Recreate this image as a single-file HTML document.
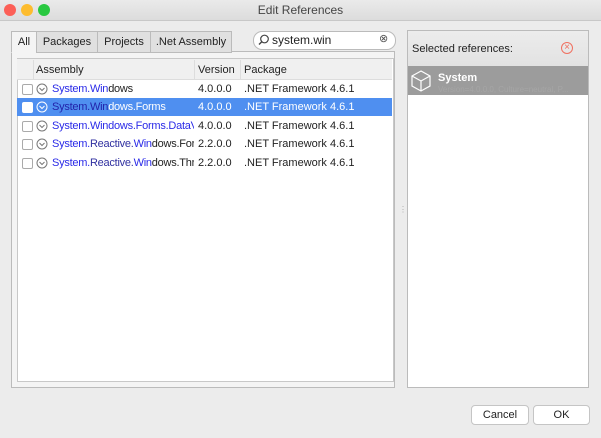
<!DOCTYPE html><html><head><style>
body{margin:0;width:601px;height:438px;background:#ececec;font-family:"Liberation Sans",sans-serif;font-size:11px;color:#222;position:relative;overflow:hidden}
.a{position:absolute}
.title{left:0;top:0;width:601px;height:20px;background:linear-gradient(#eaeaea,#dcdcdc);border-bottom:1px solid #c8c8c8;text-align:center;line-height:20px;font-size:12px;color:#444}
.dot{top:4px;width:12px;height:12px;border-radius:50%}
.tab{top:31px;height:20px;line-height:21px;border:1px solid #bbb;background:#e0e0e0;text-align:center;font-size:11px}
.row{left:17px;width:375px;height:18px;line-height:18px}
.cb{position:absolute;left:5px;top:4px;width:9px;height:9px;border:1px solid #aaa;border-radius:2px;background:#fff}
.ic{position:absolute;left:19px;top:3px}
.b{color:#2a2ae8}
.t{position:absolute;left:35px;white-space:nowrap;width:142px;overflow:hidden;letter-spacing:-0.25px}
.v{position:absolute;left:181px}
.p{position:absolute;left:227px}
.btn{top:405px;height:18px;line-height:18px;background:#fff;border:1px solid #c5c5c5;border-radius:4px;text-align:center;font-size:11px}
</style></head><body>
<div class="a title">Edit References</div>
<div class="a dot" style="left:4px;background:#fc5f57"></div>
<div class="a dot" style="left:21px;background:#fdbc2e"></div>
<div class="a dot" style="left:38px;background:#29c840"></div>
<div class="a" style="left:11px;top:51px;width:382px;height:335px;border:1px solid #bbb;background:#f4f4f4"></div>
<div class="a tab" style="left:11px;width:24px;background:#f4f4f4;border-bottom-color:#f4f4f4">All</div>
<div class="a tab" style="left:36px;width:60px">Packages</div>
<div class="a tab" style="left:97px;width:52px">Projects</div>
<div class="a tab" style="left:150px;width:80px">.Net Assembly</div>
<div class="a" style="left:253px;top:31px;width:141px;height:17px;border:1px solid #bbb;border-radius:9px;background:#fff"></div>
<svg class="a" style="left:258px;top:34px" width="12" height="12" viewBox="0 0 12 12"><circle cx="6.5" cy="5" r="3.8" fill="none" stroke="#444" stroke-width="1.2"/><path d="M3.8 7.7 1 10.5" stroke="#444" stroke-width="1.4"/></svg>
<div class="a" style="left:272px;top:33px;font-size:12px">system.win</div>
<div class="a" style="left:379px;top:32px;font-size:11px;color:#555">&#8855;</div>
<div class="a" style="left:17px;top:58px;width:375px;height:322px;background:#fff;border:1px solid #c8c8c8"></div>
<div class="a" style="left:17px;top:59px;width:375px;height:20px;background:#f0f0f0;border-bottom:1px solid #ddd"></div>
<div class="a" style="left:36px;top:64px">Assembly</div>
<div class="a" style="left:194px;top:60px;width:1px;height:19px;background:#ddd"></div>
<div class="a" style="left:198px;top:64px">Version</div>
<div class="a" style="left:240px;top:60px;width:1px;height:19px;background:#ddd"></div>
<div class="a" style="left:244px;top:64px">Package</div>
<div class="a" style="left:33px;top:60px;width:1px;height:19px;background:#ddd"></div>

<div class="a row" style="top:80px"><span class="cb"></span><svg class="ic" width="12" height="12" viewBox="0 0 12 12"><circle cx="6" cy="6" r="5" fill="none" stroke="#777"/><path d="M3.5 5 6 7.5 8.5 5" fill="none" stroke="#777"/></svg><span class="t"><span class="b">System.Win</span>dows</span><span class="v">4.0.0.0</span><span class="p">.NET Framework 4.6.1</span></div>
<div class="a row" style="top:98px;background:#4f8ff0;color:#fff"><span class="cb" style="border-color:#fff"></span><svg class="ic" width="12" height="12" viewBox="0 0 12 12"><circle cx="6" cy="6" r="5" fill="none" stroke="#fff"/><path d="M3.5 5 6 7.5 8.5 5" fill="none" stroke="#fff"/></svg><span class="t"><span style="color:#2222aa">System.Win</span>dows.Forms</span><span class="v">4.0.0.0</span><span class="p">.NET Framework 4.6.1</span></div>
<div class="a row" style="top:117px"><span class="cb"></span><svg class="ic" width="12" height="12" viewBox="0 0 12 12"><circle cx="6" cy="6" r="5" fill="none" stroke="#777"/><path d="M3.5 5 6 7.5 8.5 5" fill="none" stroke="#777"/></svg><span class="t b">System.Windows.Forms.DataVi</span><span class="v">4.0.0.0</span><span class="p">.NET Framework 4.6.1</span></div>
<div class="a row" style="top:135px"><span class="cb"></span><svg class="ic" width="12" height="12" viewBox="0 0 12 12"><circle cx="6" cy="6" r="5" fill="none" stroke="#777"/><path d="M3.5 5 6 7.5 8.5 5" fill="none" stroke="#777"/></svg><span class="t"><span class="b">System.</span><span style="color:#3030a0">Reactive.</span><span class="b">Win</span>dows.Forn</span><span class="v">2.2.0.0</span><span class="p">.NET Framework 4.6.1</span></div>
<div class="a row" style="top:154px"><span class="cb"></span><svg class="ic" width="12" height="12" viewBox="0 0 12 12"><circle cx="6" cy="6" r="5" fill="none" stroke="#777"/><path d="M3.5 5 6 7.5 8.5 5" fill="none" stroke="#777"/></svg><span class="t"><span class="b">System.</span><span style="color:#3030a0">Reactive.</span><span class="b">Win</span>dows.Thre</span><span class="v">2.2.0.0</span><span class="p">.NET Framework 4.6.1</span></div>

<div class="a" style="left:399px;top:205px;color:#aaa;font-size:8px">&#8942;</div>
<div class="a" style="left:407px;top:30px;width:180px;height:356px;border:1px solid #bbb;background:#fff"></div>
<div class="a" style="left:408px;top:31px;width:180px;height:35px;background:linear-gradient(#ececec,#e2e2e2)"></div>
<div class="a" style="left:412px;top:43px;font-size:11px">Selected references:</div>
<div class="a" style="left:561px;top:42px;width:10px;height:10px;border:1px solid #f07060;border-radius:50%;color:#f07060;font-size:10px;line-height:10px;text-align:center">×</div>
<div class="a" style="left:408px;top:66px;width:180px;height:29px;background:#9c9c9c"></div>
<svg class="a" style="left:411px;top:70px" width="20" height="22" viewBox="0 0 20 22"><path d="M10 1 19 6v10l-9 5-9-5V6z M1 6 10 11 19 6 M10 11v10" fill="none" stroke="#fff" stroke-width="1.2"/></svg>
<div class="a" style="left:438px;top:72px;color:#fff;font-weight:bold;font-size:11px">System</div>
<div class="a" style="left:438px;top:85px;color:#a6a6a6;font-size:8px">Version=4.0.0.0, Culture=neutral, P...</div>
<div class="a btn" style="left:471px;width:56px">Cancel</div>
<div class="a btn" style="left:533px;width:55px">OK</div>
</body></html>
